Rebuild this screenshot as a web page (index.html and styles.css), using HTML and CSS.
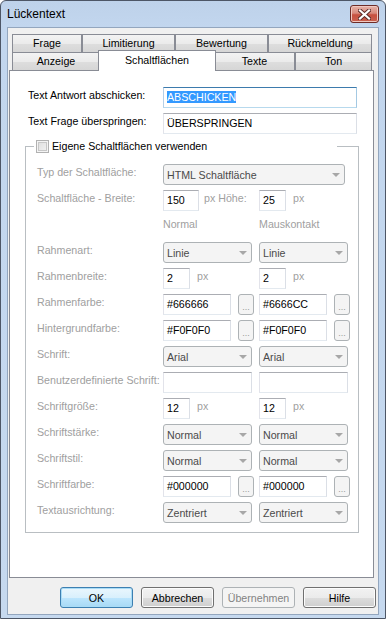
FILE: index.html
```html
<!DOCTYPE html>
<html lang="de">

<head>
  <meta charset="UTF-8">
  <title>Lückentext</title>
  <link rel="stylesheet" href="styles.css">
</head>

<body>
  <div class="window">

    <div class="titlebar">
      <span class="title">Lückentext</span>
      <span class="close">
        <svg width="13" height="11" viewBox="0 0 13 11">
          <path d="M2 1.5 L11 9.5 M11 1.5 L2 9.5" stroke="#5a2a26" stroke-width="4" stroke-linecap="square" />
          <path d="M2 1.5 L11 9.5 M11 1.5 L2 9.5" stroke="#fff" stroke-width="2.2" stroke-linecap="square" />
        </svg>
      </span>
    </div>

    <div class="client">
      <div class="tabctl">
        <div class="tabrow">
          <div class="tab w-frage">Frage</div>
          <div class="tab w-limit">Limitierung</div>
          <div class="tab w-bewert">Bewertung</div>
          <div class="tab w-rueck">Rückmeldung</div>
        </div>
        <div class="tabrow">
          <div class="tab w-anzeige">Anzeige</div>
          <div class="tab w-schalt active">Schaltflächen</div>
          <div class="tab w-texte">Texte</div>
          <div class="tab w-ton">Ton</div>
        </div>

        <div class="panel">
          <div class="field-row">
            <span class="field-label">Text Antwort abschicken:</span>
            <div class="edit focused w-long"><span class="selected">ABSCHICKEN</span></div>
          </div>
          <div class="field-row">
            <span class="field-label">Text Frage überspringen:</span>
            <div class="edit w-long">ÜBERSPRINGEN</div>
          </div>

          <fieldset class="group">
            <legend><span class="check"></span>Eigene Schaltflächen verwenden</legend>

            <div class="g-row">
              <span class="g-label">Typ der Schaltfläche:</span>
              <div class="combo w-typ">HTML Schaltfläche<span class="arrow"></span></div>
            </div>
            <div class="g-row">
              <span class="g-label">Schaltfläche - Breite:</span>
              <div class="col">
                <div class="edit w-num-wide">150</div><span class="unit u-hoehe">px Höhe:</span>
              </div>
              <div class="col">
                <div class="edit w-num">25</div><span class="unit">px</span>
              </div>
            </div>
            <div class="g-row">
              <span class="g-label"></span>
              <div class="col"><span class="unit u-head">Normal</span></div>
              <div class="col"><span class="unit u-head">Mauskontakt</span></div>
            </div>
            <div class="g-row">
              <span class="g-label">Rahmenart:</span>
              <div class="col"><div class="combo">Linie<span class="arrow"></span></div></div>
              <div class="col"><div class="combo">Linie<span class="arrow"></span></div></div>
            </div>
            <div class="g-row">
              <span class="g-label">Rahmenbreite:</span>
              <div class="col"><div class="edit w-num">2</div><span class="unit">px</span></div>
              <div class="col"><div class="edit w-num">2</div><span class="unit">px</span></div>
            </div>
            <div class="g-row">
              <span class="g-label">Rahmenfarbe:</span>
              <div class="col"><div class="edit w-color">#666666</div><span class="dots">...</span></div>
              <div class="col"><div class="edit w-color">#6666CC</div><span class="dots">...</span></div>
            </div>
            <div class="g-row">
              <span class="g-label">Hintergrundfarbe:</span>
              <div class="col"><div class="edit w-color">#F0F0F0</div><span class="dots">...</span></div>
              <div class="col"><div class="edit w-color">#F0F0F0</div><span class="dots">...</span></div>
            </div>
            <div class="g-row">
              <span class="g-label">Schrift:</span>
              <div class="col"><div class="combo">Arial<span class="arrow"></span></div></div>
              <div class="col"><div class="combo">Arial<span class="arrow"></span></div></div>
            </div>
            <div class="g-row">
              <span class="g-label">Benutzerdefinierte Schrift:</span>
              <div class="col"><div class="edit w-font"></div></div>
              <div class="col"><div class="edit w-font"></div></div>
            </div>
            <div class="g-row">
              <span class="g-label">Schriftgröße:</span>
              <div class="col"><div class="edit w-num">12</div><span class="unit">px</span></div>
              <div class="col"><div class="edit w-num">12</div><span class="unit">px</span></div>
            </div>
            <div class="g-row">
              <span class="g-label">Schriftstärke:</span>
              <div class="col"><div class="combo">Normal<span class="arrow"></span></div></div>
              <div class="col"><div class="combo">Normal<span class="arrow"></span></div></div>
            </div>
            <div class="g-row">
              <span class="g-label">Schriftstil:</span>
              <div class="col"><div class="combo">Normal<span class="arrow"></span></div></div>
              <div class="col"><div class="combo">Normal<span class="arrow"></span></div></div>
            </div>
            <div class="g-row">
              <span class="g-label">Schriftfarbe:</span>
              <div class="col"><div class="edit w-color">#000000</div><span class="dots">...</span></div>
              <div class="col"><div class="edit w-color">#000000</div><span class="dots">...</span></div>
            </div>
            <div class="g-row">
              <span class="g-label">Textausrichtung:</span>
              <div class="col"><div class="combo">Zentriert<span class="arrow"></span></div></div>
              <div class="col"><div class="combo">Zentriert<span class="arrow"></span></div></div>
            </div>
          </fieldset>
        </div>
      </div>

      <div class="buttons">
        <button class="btn default">OK</button>
        <button class="btn">Abbrechen</button>
        <button class="btn" disabled>Übernehmen</button>
        <button class="btn">Hilfe</button>
      </div>
    </div>

  </div>
</body>

</html>
```

FILE: styles.css
```css
body {
  margin: 0;
  font-family: "Liberation Sans", Arial, sans-serif;
  font-size: 10.67px;
  color: #000;
  background: #fff;
}

/* window frame */

.window {
  width: 386px;
  height: 619px;
  box-sizing: border-box;
  display: flex;
  flex-direction: column;
  padding: 0 6px 3px;
  border: 1px solid #4d5666;
  border-radius: 6px 6px 0 0;
  background: linear-gradient(#bed2ea, #c2d6ee 26px, #c6d9ef);
}

.titlebar {
  flex: none;
  height: 26px;
  display: flex;
  justify-content: space-between;
}

.title {
  font-size: 12px;
  line-height: 26px;
}

.close {
  box-sizing: border-box;
  width: 29px;
  height: 18px;
  margin-top: 4px;
  display: flex;
  align-items: center;
  justify-content: center;
  border: 1px solid #6e2c27;
  border-radius: 3px;
  background: linear-gradient(#e6b2a8, #d88a7c 45%, #c7503f 55%, #c9614f);
  box-shadow: inset 0 0 0 1px #f0c8c0;
}

.client {
  flex: 1;
  display: flex;
  flex-direction: column;
  padding: 6px 2px 0 1px;
  border: 1px solid #93a6be;
  background: #f0f0f0;
}

/* tabs */

.tabctl {
  width: 365px;
}

.tabrow {
  display: flex;
  align-items: flex-start;
  height: 18px;
  padding: 0 2px 0 3px;
}

.tab {
  box-sizing: border-box;
  height: 18px;
  border: 1px solid #898c95;
  border-bottom: none;
  background: linear-gradient(#f3f3f3, #ebebeb 50%, #dedede 50%, #d6d6d6);
  text-align: center;
  line-height: 17px;
  white-space: nowrap;
}

.tab.active {
  position: relative;
  z-index: 1;
  height: 21px;
  margin: -2px -2px 0;
  background: #fff;
  line-height: 19px;
}

.w-frage { width: 70px; }
.w-limit { width: 93px; }
.w-bewert { width: 93px; }
.w-rueck { width: 104px; }
.w-anzeige { width: 88px; }
.w-schalt { width: 118px; }
.w-texte { width: 81px; }
.w-ton { width: 77px; }

.panel {
  box-sizing: border-box;
  height: 508px;
  padding-top: 16px;
  border: 1px solid #898c95;
  background: #fff;
}

/* top fields */

.field-row {
  display: flex;
  height: 21px;
  margin-bottom: 5px;
  padding-left: 18px;
}

.field-label {
  width: 135px;
  line-height: 16px;
}

.edit {
  box-sizing: border-box;
  height: 21px;
  padding-left: 3px;
  border: 1px solid #abadb3;
  border-color: #abadb3 #dbdfe6 #e3e9ef #e2e3ea;
  background: #fff;
  line-height: 19px;
  white-space: nowrap;
}

.edit.focused {
  border-color: #3d7bad #a4c9e3 #b7d9ed #b5cfe7;
}

.selected {
  display: inline-block;
  line-height: 12px;
  background: #3399ff;
  color: #fff;
}

.w-long { width: 194px; }
.w-num { width: 27px; }
.w-num-wide { width: 36px; }
.w-color { width: 68px; }
.w-font { width: 89px; }

/* group box */

.group {
  margin: 4px 14px 0 15px;
  padding: 11px 0 9px 11px;
  border: 1px solid #b9bec2;
  min-width: 0;
}

.group legend {
  width: 301px;
  margin-left: -3px;
  padding: 0 0 0 2px;
  display: flex;
  align-items: center;
  line-height: 14px;
}

.check {
  box-sizing: border-box;
  width: 13px;
  height: 13px;
  margin-right: 3px;
  border: 1px solid #b1b1b1;
  background: linear-gradient(135deg, #dcdcdc, #f4f4f4);
  box-shadow: inset 0 0 0 1px #f4f4f4, inset 0 0 0 2px #c7c7c7;
}

.g-row {
  display: flex;
  height: 21px;
  margin-bottom: 5px;
}

.g-row:last-child {
  margin-bottom: 0;
}

.g-label {
  flex: none;
  width: 126px;
  line-height: 16px;
  color: #a0a0a0;
  white-space: nowrap;
}

.col {
  flex: none;
  width: 96px;
  display: flex;
}

.unit {
  margin-left: 7px;
  line-height: 16px;
  color: #a0a0a0;
  white-space: nowrap;
}

.u-hoehe {
  margin-left: 5px;
}

.u-head {
  margin-left: 0;
}

.combo {
  box-sizing: border-box;
  width: 89px;
  height: 21px;
  display: flex;
  align-items: center;
  justify-content: space-between;
  padding: 0 4px 0 3px;
  border: 1px solid #adb2b5;
  border-radius: 3px;
  background: #f4f4f4;
  color: #4a4a4a;
  white-space: nowrap;
}

.w-typ {
  width: 182px;
}

.arrow {
  width: 0;
  height: 0;
  border-left: 4px solid transparent;
  border-right: 4px solid transparent;
  border-top: 4px solid #a7a7a7;
}

.dots {
  box-sizing: border-box;
  width: 16px;
  height: 21px;
  margin-left: 7px;
  border: 1px solid #adb2b5;
  border-radius: 3px;
  background: #f4f4f4;
  color: #9a9a9a;
  text-align: center;
  line-height: 24px;
  font-size: 9px;
}

/* dialog buttons */

.buttons {
  display: flex;
  justify-content: flex-end;
  gap: 8px;
  margin-top: 9px;
}

.btn {
  box-sizing: border-box;
  width: 73px;
  height: 21px;
  padding: 0;
  border: 1px solid #707070;
  border-radius: 3px;
  background: linear-gradient(#f2f2f2, #ebebeb 50%, #dddddd 50%, #cfcfcf);
  box-shadow: inset 0 0 0 1px #fcfcfc;
  font-family: inherit;
  font-size: 10.67px;
  color: #000;
}

.btn.default {
  border-color: #3c7fb1;
  background: linear-gradient(#eaf6fd, #d9f0fc 50%, #bee6fd 50%, #a7d9f5);
  box-shadow: inset 0 0 0 1px #a9dcf6;
}

.btn:disabled {
  border-color: #adb2b5;
  background: #f4f4f4;
  box-shadow: none;
  color: #838383;
}
```
